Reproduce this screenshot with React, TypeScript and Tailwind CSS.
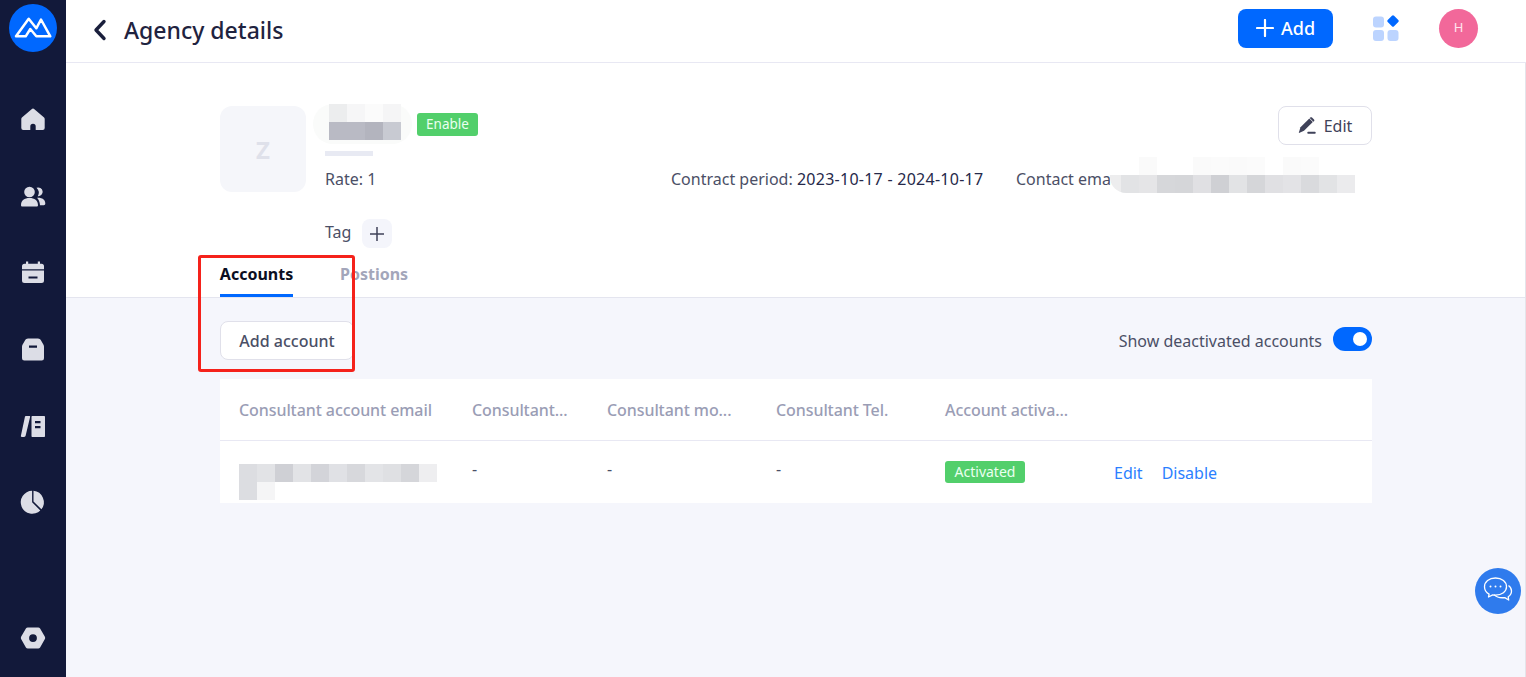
const ICON = "#dcdde6";

function Logo() {
  return (
    <div className="flex h-12 w-12 items-center justify-center rounded-full bg-[#0068ff]">
      <svg width="38" height="24" viewBox="-1 -1 38 24" fill="none" stroke="#fff" strokeWidth="2.500" strokeLinejoin="round">
        <path d="M1 19.300 13.700 1.800 21.300 11.300 26 2.500 35.300 19.300H21.300L15.300 12 10.700 19.300z" />
      </svg>
    </div>
  );
}

function Home() {
  return (
    <svg width="26" height="26" viewBox="0 0 26 26" fill={ICON}>
      <path d="M11.600 3.200a2.200 2.200 0 0 1 2.800 0l9.400 8a2.400 2.400 0 0 1 .9 1.900V22a2 2 0 0 1-2 2h-7v-3.500a2.700 2.700 0 0 0-5.400 0V24h-7a2 2 0 0 1-2-2v-8.900a2.400 2.400 0 0 1 .9-1.900z" />
    </svg>
  );
}

function Users() {
  return (
    <svg width="26" height="26" viewBox="0 0 26 26" fill={ICON}>
      <circle cx="9.500" cy="9" r="5.300" />
      <path d="M1 22.200C1 17.500 4.500 15 9.500 15s8.500 2.500 8.500 7.200c0 .8-.6 1.300-1.400 1.300H2.400c-.8 0-1.400-.5-1.400-1.300z" />
      <path d="M16.500 4.800a4.400 4.400 0 1 1 1.300 8.400 7 7 0 0 0-1.300-8.400z" />
      <path d="M17 14.800c4.800-.4 8.300 1.700 8.300 5.700 0 1.100-.6 1.700-1.500 1.700H20c-.2-3-1.200-5.400-3-7.400z" />
    </svg>
  );
}

function Calendar() {
  return (
    <svg width="26" height="26" viewBox="0 0 26 26" fill={ICON}>
      <path d="M6 2.500h2.200v2.300h9.600V2.500H20v2.300h1.500A2.500 2.500 0 0 1 24 7.300v3H2v-3a2.500 2.500 0 0 1 2.500-2.500H6z" />
      <path fillRule="evenodd" d="M2 11.400h22v10.100a2.500 2.500 0 0 1-2.500 2.500h-17A2.500 2.500 0 0 1 2 21.500zM8.500 17.500v2h9v-2z" />
    </svg>
  );
}

function Box() {
  return (
    <svg width="26" height="26" viewBox="0 0 26 26" fill={ICON}>
      <path fillRule="evenodd" d="M8 2.500h10c1.300 0 2.300.7 2.900 1.800l2.600 4.500c.3.600.5 1.200.5 1.900v11.500a2.300 2.300 0 0 1-2.300 2.300H4.300A2.300 2.300 0 0 1 2 22.200V10.700c0-.7.200-1.300.5-1.900l2.600-4.500C5.700 3.200 6.700 2.500 8 2.500zM9 9.500v2.200h8V9.500z" />
    </svg>
  );
}

function Book() {
  return (
    <svg width="26" height="26" viewBox="0 0 26 26" fill={ICON}>
      <path d="M5.800 3h3.500c.6 0 1 .5.800 1.100L5.600 22.800c-.2.700-.7 1.200-1.500 1.200H1.800c-.7 0-1.100-.6-.9-1.200L5 3.600c.1-.4.400-.6.800-.6z" />
      <path fillRule="evenodd" d="M12.500 3H24c.6 0 1 .4 1 1v19c0 .6-.4 1-1 1H12.500c-.6 0-1-.4-1-1V4c0-.6.4-1 1-1zM15 8v2.300h5.500V8zm0 5v2.300h5.500V13z" />
    </svg>
  );
}

function Pie() {
  return (
    <svg width="26" height="26" viewBox="0 0 26 26" fill={ICON}>
      <path d="M12.100 1.800v11.500l8.200 8.200a11.500 11.500 0 1 1-8.200-19.700z" />
      <path d="M13.500 1.800a11.500 11.500 0 0 1 7.900 18.500l-7.900-7.900z" />
    </svg>
  );
}

function Nut() {
  return (
    <svg width="26" height="26" viewBox="0 0 26 26" fill={ICON}>
      <path fillRule="evenodd" d="M7.800 2.500h10.400c.8 0 1.500.4 1.900 1.100l4.800 8.200c.4.700.4 1.600 0 2.300l-4.800 8.300c-.4.700-1.100 1.100-1.900 1.100H7.800c-.8 0-1.500-.4-1.900-1.100l-4.800-8.300c-.4-.7-.4-1.600 0-2.300l4.800-8.200c.4-.7 1.100-1.100 1.900-1.100zM13 9.200a3.900 3.900 0 1 0 0 7.800 3.900 3.900 0 0 0 0-7.800z" />
    </svg>
  );
}

function Pencil() {
  return (
    <svg width="18" height="18" viewBox="0 0 18 18">
      <path fill="#3f4259" d="M11.300 1.500 14.800 5 6 13.800 1 16l-.2-.2L2.500 10.300z" />
      <path fill="#3f4259" d="M12.300.5c.5-.5 1.200-.5 1.700 0l2 2c.5.500.5 1.200 0 1.700l-.6.600L11.700 1.100z" />
      <rect x="9.500" y="14.700" width="8" height="2" rx="0.500" fill="#3f4259" />
    </svg>
  );
}

function Apps() {
  return (
    <svg width="28" height="28" viewBox="0 0 28 28">
      <rect x="1" y="2.500" width="11" height="11" rx="3" fill="#bcd4ff" />
      <rect x="1" y="16" width="11" height="11" rx="3" fill="#bcd4ff" />
      <rect x="15.500" y="16" width="11" height="11" rx="3" fill="#bcd4ff" />
      <rect x="16.500" y="2.500" width="9" height="9" rx="1.500" fill="#0068ff" transform="rotate(45 21 7)" />
    </svg>
  );
}

function Chat() {
  return (
    <svg width="32" height="30" viewBox="0 0 32 30" fill="none" stroke="#fff" strokeWidth="1.300" strokeLinejoin="round">
      <path d="M13.500 2C7 2 2.500 5.800 2.500 10.800c0 3.300 1.900 5.900 4.600 7.300L6.500 21l4.200-2.100c.9.100 1.800.2 2.800.2 6.500 0 11-3.500 11-8.300S20 2 13.500 2z" />
      <path d="M26.500 9.500c2 1.400 3 3.300 3 5.500 0 2.500-1.300 4.500-3.300 5.700l.5 3.300-3.900-2.400c-3.800.5-8-.2-10.800-3" />
      <circle cx="8.500" cy="10.500" r="1" fill="#fff" stroke="none" />
      <circle cx="13.500" cy="10.500" r="1" fill="#fff" stroke="none" />
      <circle cx="18.500" cy="10.500" r="1" fill="#fff" stroke="none" />
    </svg>
  );
}

function Watermark() {
  const tiles = Array.from({ length: 35 });
  return (
    <div className="pointer-events-none absolute inset-x-0 bottom-0 top-[43px] overflow-hidden">
      <div className="-ml-[48px] grid w-[1715px] grid-cols-[repeat(7,245px)]">
        {tiles.map((_, i) => (
          <div key={i} className="relative h-[124px]">
            <div className="absolute left-[75px] top-[40px] w-[190px] -rotate-[32deg] whitespace-nowrap text-center text-[14px] leading-[20px] text-[#000000]/[0.025]">
              huangyicheng@m 2023-11-07
              <br />
              huangyicheng
            </div>
          </div>
        ))}
      </div>
    </div>
  );
}

const nameTop = ["bg-[#ecedee]", "bg-[#f6f6f7]", "bg-[#fbfbfb]", "bg-[#f5f5f6]"];
const nameBottom = ["bg-[#b9bac4]", "bg-[#b9bac4]", "bg-[#b3b4be]", "bg-[#c8cad2]"];
const contactTop = ["bg-white", "bg-white", "bg-[#fafafa]", "bg-white", "bg-white", "bg-[#fafafa]", "bg-[#fbfbfb]", "bg-[#fafafa]", "bg-[#fbfbfb]", "bg-white", "bg-[#fafafa]", "bg-[#fbfbfb]", "bg-white", "bg-white"];
const contactBottom = ["bg-[#ededee]", "bg-[#e2e3e5]", "bg-[#e5e5e7]", "bg-[#d6d7da]", "bg-[#d5d6d9]", "bg-[#e0e0e3]", "bg-[#cfd0d4]", "bg-[#e2e3e5]", "bg-[#d5d6d9]", "bg-[#e0e0e3]", "bg-[#e3e3e6]", "bg-[#d9dadd]", "bg-[#e2e3e5]", "bg-[#ebebed]"];
const rowTop = ["bg-[#dcdde1]", "bg-[#e2e3e6]", "bg-[#cfd0d5]", "bg-[#e2e3e6]", "bg-[#d3d4d9]", "bg-[#e0e1e5]", "bg-[#d7d8dc]", "bg-[#e3e4e7]", "bg-[#dfe0e3]", "bg-[#d5d6da]", "bg-[#eeeef0]"];
const rowBottom = ["bg-[#dcdde1]", "bg-[#f5f5f6]"];

function Cells({ colors }: { colors: string[] }) {
  return (
    <div className="flex h-[18px] justify-end">
      {colors.map((c, i) => (
        <div key={i} className={`h-[18px] w-[18px] shrink-0 ${c}`} />
      ))}
    </div>
  );
}

const columns = "grid grid-cols-[233px_135px_169px_169px_169px_1fr]";

export default function App() {
  return (
    <div className="relative flex h-[677px] w-[1526px] overflow-hidden bg-white font-['Noto_Sans',sans-serif] text-[16px] text-[#4b4f66]">
      <nav className="z-10 flex w-[66px] shrink-0 flex-col items-center bg-[#12193a] pb-[26px] pt-[4px]">
        <Logo />
        <div className="mt-[54px] flex flex-col gap-[50.7px]">
          <Home />
          <Users />
          <Calendar />
          <Box />
          <Book />
          <Pie />
        </div>
        <div className="mt-auto">
          <Nut />
        </div>
      </nav>

      <main className="relative flex min-w-0 flex-1 flex-col">
        <header className="flex h-[63px] shrink-0 items-center border-b border-[#e8e8f3] bg-white pb-[2px] pl-[24px] pr-[48px]">
          <svg width="20" height="22" viewBox="0 0 20 22" fill="none" stroke="#1a1f3c" strokeWidth="3.400" strokeLinecap="round" strokeLinejoin="round">
            <path d="M14 2.500 6 11l8 8.500" />
          </svg>
          <h1 className="ml-[14px] text-[23px] font-medium leading-[32px] text-[#1f2340]">Agency details</h1>
          <div className="-mt-[4px] ml-auto flex items-center">
            <button className="flex h-[39px] w-[95px] items-center justify-center gap-[7px] rounded-lg bg-[#0068ff] text-[18px] font-medium text-white">
              <svg width="18" height="18" viewBox="0 0 18 18" stroke="#fff" strokeWidth="2.200" strokeLinecap="round">
                <path d="M9 1v16M1 9h16" />
              </svg>
              Add
            </button>
            <div className="ml-[39px]">
              <Apps />
            </div>
            <div className="ml-[39px] flex h-[39px] w-[39px] items-center justify-center rounded-full bg-[#f2689a] text-[13px] text-[#ffe4ee]">H</div>
          </div>
        </header>

        <section className="relative h-[235px] shrink-0 border-b border-[#e4e5ef] bg-white px-[154px]">
          <div className="flex pt-[43px]">
            <div className="flex h-[86px] w-[86px] shrink-0 items-center justify-center rounded-xl bg-[#f5f6fa] pt-[2px] text-[24px] font-bold text-[#dfe1ea]">Z</div>
            <div className="ml-[19px] min-w-0 flex-1">
              <div className="flex h-[62px] items-start">
                <div className="relative -mt-[2px] h-[52px] w-[92px]">
                  <div className="absolute -left-[12px] top-0 h-[40px] w-[99px] rounded-[20px] bg-[#fafbfa]" />
                  <div className="absolute left-[4px] top-0">
                    <Cells colors={nameTop} />
                    <Cells colors={nameBottom} />
                  </div>
                  <div className="absolute left-0 top-[47px] h-[5px] w-[48px] bg-[#e8eaf3]" />
                </div>
                <span className="mt-[7px] flex h-[23px] w-[61px] items-center justify-center rounded-[3px] bg-[#52cf6b] text-[13.500px] text-[#eafff0]">Enable</span>
                <button className="ml-auto flex h-[39px] w-[94px] items-center justify-center gap-[8px] rounded-lg border border-[#e0e0ea] bg-white text-[#3f4259]">
                  <Pencil />
                  Edit
                </button>
              </div>
              <div className="relative grid h-[22px] grid-cols-[346px_345px_1fr] items-center leading-[22px]">
                <span>Rate: 1</span>
                <span>
                  Contract period: <span className="tracking-[0.26px] text-[#26294a]">2023-10-17 - 2024-10-17</span>
                </span>
                <span>Contact email:</span>
                <div className="absolute left-[785px] top-[-11px] w-[245px] overflow-hidden rounded-l-[16px] bg-white">
                  <Cells colors={contactTop} />
                  <Cells colors={contactBottom} />
                </div>
              </div>
              <div className="mt-[29px] flex items-center gap-[11px]">
                <span className="-mt-[3px] leading-[22px]">Tag</span>
                <span className="flex h-[29px] w-[30px] items-center justify-center rounded-lg bg-[#f4f5fb]">
                  <svg width="14" height="14" viewBox="0 0 14 14" stroke="#3f4259" strokeWidth="1.500">
                    <path d="M7 0v14M0 7h14" />
                  </svg>
                </span>
              </div>
            </div>
          </div>
          <div className="absolute bottom-0 left-[154px] flex h-[44px] gap-[47px] text-[16px] font-bold">
            <div className="flex h-[44px] w-[73px] items-start justify-center whitespace-nowrap border-b-[3px] border-[#0068ff] pt-[10px] leading-[22px] text-[#0b0e22]">Accounts</div>
            <div className="whitespace-nowrap pt-[10px] leading-[22px] text-[#a3a6ba]">Postions</div>
          </div>
        </section>

        <section className="flex-1 bg-[#f5f6fc] px-[154px]">
          <div className="flex items-center justify-between pt-[23px]">
            <button className="flex h-[39px] w-[134px] items-center justify-center rounded-lg border border-[#e0e0ea] bg-white font-medium text-[#4b4f66]">Add account</button>
            <div className="flex items-center gap-[11px]">
              <span>Show deactivated accounts</span>
              <span className="-mt-[3px] flex h-[24px] w-[39px] items-center justify-end rounded-full bg-[#0068ff] pr-[5px]">
                <span className="h-[14px] w-[14px] rounded-full bg-white" />
              </span>
            </div>
          </div>

          <div className="mt-[19px] bg-white">
            <div className={`${columns} h-[62px] items-center border-b border-[#e8e8f3] font-medium tracking-[-0.08px] text-[#9a9db5]`}>
              <span className="pl-[19px]">Consultant account email</span>
              <span className="pl-[19px]">Consultant...</span>
              <span className="pl-[19px]">Consultant mo...</span>
              <span className="pl-[19px]">Consultant Tel.</span>
              <span className="pl-[19px]">Account activa...</span>
              <span />
            </div>
            <div className={`${columns} h-[62px] items-start`}>
              <div className="w-[217px] pl-[19px] pt-[23px]">
                <Cells colors={rowTop} />
                <div className="flex">
                  <Cells colors={rowBottom} />
                </div>
              </div>
              <span className="pl-[19px] pt-[17px] leading-[22px]">-</span>
              <span className="pl-[19px] pt-[17px] leading-[22px]">-</span>
              <span className="pl-[19px] pt-[17px] leading-[22px]">-</span>
              <div className="pl-[19px] pt-[20px]">
                <span className="flex h-[22px] w-[80px] items-center justify-center rounded-[3px] bg-[#52cf6b] pb-[2px] text-[14px] text-[#eafff0]">Activated</span>
              </div>
              <div className="flex gap-[19px] pl-[19px] pt-[21px] leading-[22px] text-[#2b7fff]">
                <span>Edit</span>
                <span>Disable</span>
              </div>
            </div>
          </div>
        </section>

        <Watermark />
        <div className="absolute bottom-0 right-0 top-[63px] w-px bg-[#e4e4ea]" />
      </main>

      <div className="pointer-events-none absolute left-[198px] top-[255px] h-[117px] w-[157px] rounded-[3px] border-[3px] border-[#f5221b]" />

      <div className="absolute left-[1475px] top-[568px] flex h-[46px] w-[46px] items-center justify-center rounded-full bg-[#2f7bed]">
        <Chat />
      </div>
    </div>
  );
}
